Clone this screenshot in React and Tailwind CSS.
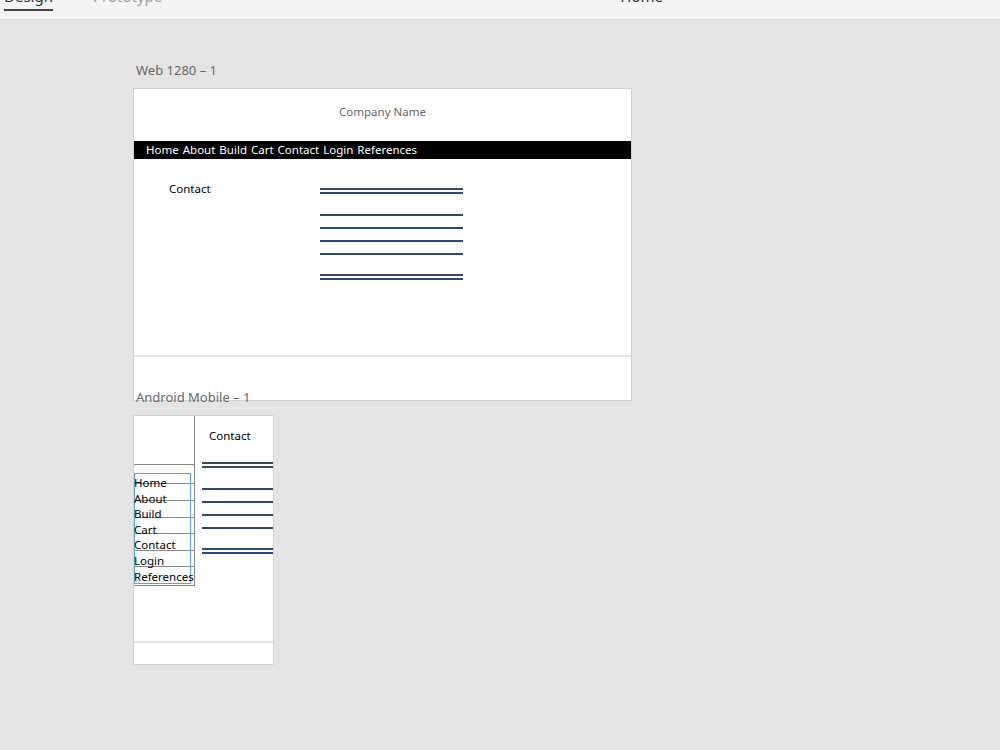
const webNav = ['Home', 'About', 'Build', 'Cart', 'Contact', 'Login', 'References']

export default function App() {
  return (
    <div className="flex h-[750px] w-[1000px] flex-col overflow-hidden bg-[#e4e4e4] font-['Noto_Sans',sans-serif]">
      <TopBar />
      <main className="flex flex-col pl-[133px]">
        <p className="mt-[40px] h-[20px] pl-[3px] text-[13px] leading-[20px] text-[#666]">Web 1280 – 1</p>
        <WebBoard />
        <p className="relative z-10 -mt-[13px] h-[18px] pl-[3px] text-[13px] leading-[18px] text-[#666]">Android Mobile – 1</p>
        <MobileBoard />
      </main>
    </div>
  )
}

function TopBar() {
  return (
    <header className="relative h-[20px] shrink-0 overflow-hidden border-b border-[#dadada] bg-[#f4f4f4]">
      <div className="flex items-start">
        <div className="ml-[4px] flex w-[50px] flex-col">
          <span className="-mt-[14px] text-[15px] leading-[20px] text-[#333]">Design</span>
          <span className="mt-[3px] h-[2px] w-[49px] bg-[#444]" />
        </div>
        <span className="-mt-[14px] ml-[39px] text-[15px] leading-[20px] text-[#a0a0a0]">Prototype</span>
        <span className="-mt-[14px] ml-[458px] text-[15px] leading-[20px] text-[#333]">Home</span>
      </div>
    </header>
  )
}

function Rule({ className = '' }) {
  return <div className={`h-[2px] bg-[#33496a] ${className}`} />
}

function WebBoard() {
  return (
    <section className="mt-[8px] flex h-[313px] w-[499px] flex-col border border-[#d2d2d2] bg-white">
      <div className="flex h-[52px] justify-center pt-[15px]">
        <span className="text-[11.5px] leading-[16px] text-[#666]">Company Name</span>
      </div>
      <nav className="flex h-[18px] items-center gap-[4px] bg-black pl-[12px] text-[11.5px] leading-[18px] text-white">
        {webNav.map((item) => (
          <span key={item}>{item}</span>
        ))}
      </nav>
      <div className="flex h-[196px]">
        <span className="ml-[35px] mt-[22px] w-[151px] text-[11.5px] leading-[16px] text-black">Contact</span>
        <div className="mt-[29px] flex w-[143px] flex-col">
          <Rule />
          <Rule className="mt-[2px]" />
          <Rule className="mt-[20px]" />
          <Rule className="mt-[11px]" />
          <Rule className="mt-[11px]" />
          <Rule className="mt-[11px]" />
          <Rule className="mt-[19px]" />
          <Rule className="mt-[2px]" />
        </div>
      </div>
      <div className="h-[2px] bg-[#e2e2e2]" />
      <div className="flex-1" />
    </section>
  )
}

function MobileBoard() {
  return (
    <section className="mt-[9px] flex h-[250px] w-[141px] flex-col border border-[#d2d2d2] bg-white">
      <div className="flex h-[170px]">
        <div className="flex w-[61px] flex-col border-r border-[#888]">
          <div className="h-[50px] border-b border-[#888]" />
          <div className="relative flex-1">
            <div className="flex flex-col">
              <div className="h-[19px] border-b border-[#888]" />
              <div className="h-[17px] border-b border-[#888]" />
              <div className="h-[17px] border-b border-[#888]" />
              <div className="h-[16px] border-b border-[#888]" />
              <div className="h-[17px] border-b border-[#888]" />
              <div className="h-[16px] border-b border-[#888]" />
              <div className="h-[19px] border-b border-[#888]" />
            </div>
            <ul className="absolute left-0 top-[8px] flex h-[111px] w-[57px] flex-col border border-[#5aa6d0] pt-[1px] text-[11.5px] leading-[15.6px] text-black">
              {webNav.map((item) => (
                <li key={item} className="-ml-[1px] whitespace-nowrap">
                  {item}
                </li>
              ))}
            </ul>
          </div>
        </div>
        <div className="flex flex-1 flex-col pl-[7px]">
          <span className="ml-[7px] mt-[12px] text-[11.5px] leading-[16px] text-black">Contact</span>
          <div className="mt-[18px] flex flex-col">
            <Rule />
            <Rule className="mt-[2px]" />
            <Rule className="mt-[20px]" />
            <Rule className="mt-[11px]" />
            <Rule className="mt-[11px]" />
            <Rule className="mt-[11px]" />
            <Rule className="mt-[19px]" />
            <Rule className="mt-[2px]" />
          </div>
        </div>
      </div>
      <div className="h-[55px]" />
      <div className="h-[2px] bg-[#e2e2e2]" />
      <div className="flex-1" />
    </section>
  )
}
